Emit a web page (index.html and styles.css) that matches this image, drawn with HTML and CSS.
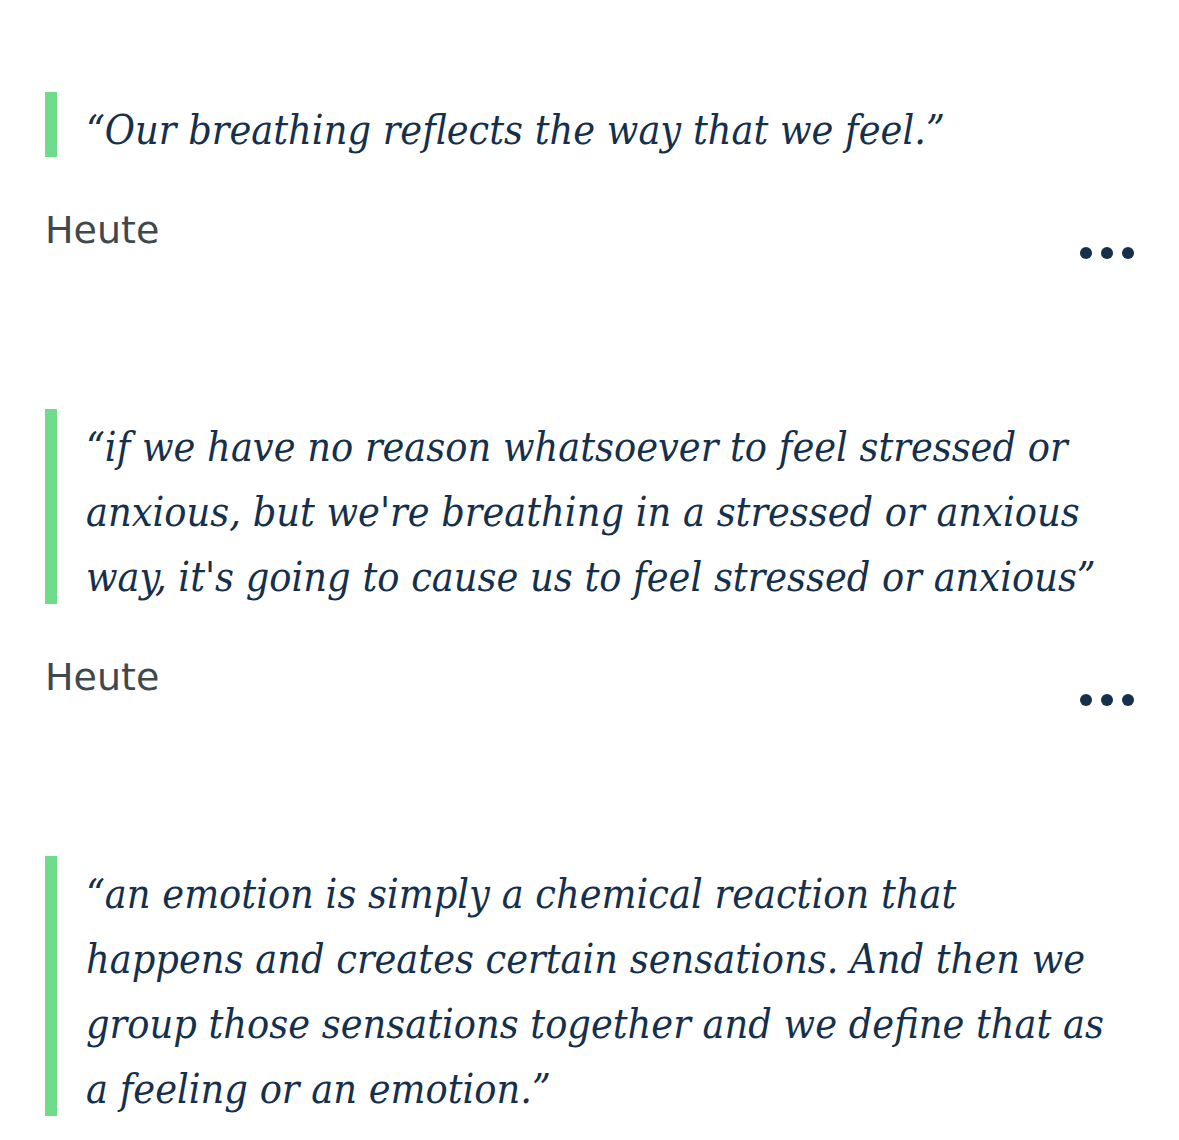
FILE: index.html
```html
<!DOCTYPE html>
<html lang="de">
<head>
<meta charset="utf-8">
<title>Zitate</title>
<link rel="stylesheet" href="styles.css">
</head>
<body>
<main class="feed">
  <article class="entry">
    <blockquote class="quote">“Our breathing reflects the way that we feel.”</blockquote>
    <div class="meta">
      <span class="date">Heute</span>
      <button class="more" type="button" aria-label="Mehr"><span></span><span></span><span></span></button>
    </div>
  </article>
  <article class="entry">
    <blockquote class="quote">“if we have no reason whatsoever to feel stressed or anxious, but we're breathing in a stressed or anxious way, it's going to cause us to feel stressed or anxious”</blockquote>
    <div class="meta">
      <span class="date">Heute</span>
      <button class="more" type="button" aria-label="Mehr"><span></span><span></span><span></span></button>
    </div>
  </article>
  <article class="entry">
    <blockquote class="quote">“an emotion is simply a chemical reaction that happens and creates certain sensations. And then we group those sensations together and we define that as a feeling or an emotion.”</blockquote>
  </article>
</main>
</body>
</html>
```
FILE: styles.css
```css
* { box-sizing: border-box; }

html, body {
  margin: 0;
  background: #ffffff;
}

body {
  font-family: "DejaVu Sans", sans-serif;
  color: #15304c;
}

.feed {
  padding: 92px 45px 0 45px;
  display: flex;
  flex-direction: column;
  gap: 134px;
}

.quote {
  margin: 0;
  padding: 6px 14px 0 41px;
  font-family: "DejaVu Serif Condensed", "DejaVu Serif", serif;
  font-style: italic;
  font-size: 41px;
  line-height: 65px;
  color: #15304c;
  background: linear-gradient(#6edc8a, #6edc8a) no-repeat 0 0 / 12px calc(100% - 6px);
}

.meta {
  margin-top: 45px;
  display: flex;
  justify-content: space-between;
  align-items: flex-start;
}

.date {
  font-family: "DejaVu Sans", sans-serif;
  font-size: 38px;
  line-height: 44px;
  color: #3e484d;
}

.more {
  margin: 23px 0 0 0;
  padding: 0;
  border: 0;
  background: transparent;
  height: 44px;
  display: flex;
  align-items: center;
  gap: 9px;
  cursor: pointer;
}

.more span {
  width: 12px;
  height: 12px;
  border-radius: 50%;
  background: #15304c;
}
```
